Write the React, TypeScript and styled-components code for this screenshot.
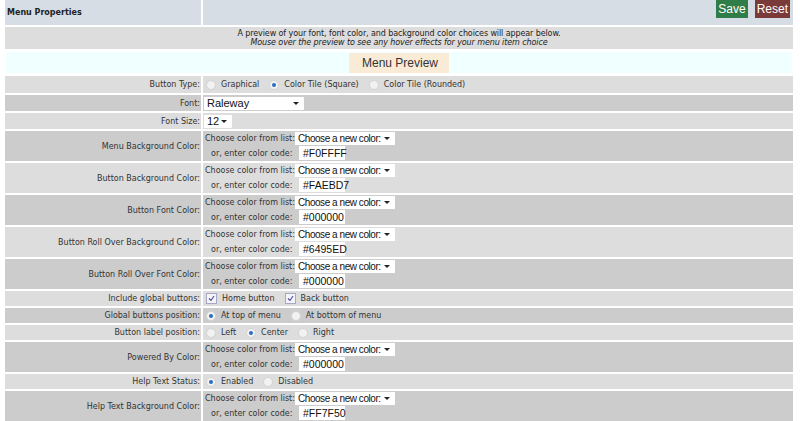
import React from 'react';
import styled, { createGlobalStyle } from 'styled-components';

const GlobalStyle = createGlobalStyle`
  html, body { margin: 0; padding: 0; background: #fff; }
  body { font-family: "DejaVu Sans", Verdana, sans-serif; font-size: 8px; color: #333; }
`;

type RowTone = 'light' | 'dark';

const Page = styled.div`
  padding: 0 5px 0 3px;
  margin-top: -2px;
`;

const Table = styled.table`
  width: 100%;
  border-collapse: separate;
  border-spacing: 2px;
`;

const Row = styled.tr<{ $tone: RowTone }>`
  background: ${(p) => (p.$tone === 'light' ? '#dddddd' : '#cccccc')};
`;

const HeaderRow = styled.tr`
  background: #d6dde4;
`;

const HeaderTitle = styled.td`
  width: 192px;
  height: 25px;
  padding: 0 2px;
  font-weight: bold;
  color: #222;
  vertical-align: middle;
`;

const HeaderActions = styled.td`
  text-align: right;
  vertical-align: top;
  padding: 0 3px 0 0;
`;

const ActionButton = styled.button<{ $kind: 'save' | 'reset' }>`
  font-family: "Liberation Sans", Arial, sans-serif;
  font-size: 12px;
  color: #fff;
  border: none;
  padding: 0 2px;
  height: 18px;
  margin-left: 7px;
  vertical-align: top;
  background: ${(p) => (p.$kind === 'save' ? '#2f7d48' : '#7a3a3a')};
`;

const InfoCell = styled.td`
  text-align: center;
  height: 22px;
  padding: 0;
  line-height: 9px;
  color: #222;
  letter-spacing: -0.1px;
`;

const PreviewCell = styled.td`
  background: #f0ffff;
  height: 21px;
  padding: 0;
  text-align: center;
  border: 1px solid #fff;
`;

const PreviewBox = styled.span`
  display: inline-block;
  background: #faebd7;
  font-family: "Liberation Sans", Arial, sans-serif;
  font-size: 12px;
  color: #333;
  padding: 3px 11px 3px 13px;
`;

const Label = styled.td`
  width: 192px;
  text-align: right;
  padding: 0 1px 0 2px;
  white-space: nowrap;
`;

const Value = styled.td<{ $h: number }>`
  padding: 0 1px;
  height: ${(p) => p.$h}px;
  vertical-align: middle;
`;

const Options = styled.div`
  display: flex;
  align-items: center;
  gap: 6px;
  padding-left: 2px;
`;

const Option = styled.label`
  display: flex;
  align-items: center;
  gap: 3px;
  margin-right: 4px;
`;

const Radio = styled.span<{ $on?: boolean }>`
  width: 8px;
  height: 8px;
  margin-right: 2px;
  border-radius: 50%;
  border: 1px solid #d4d4d4;
  background: #f2f2f2;
  position: relative;
  &::after {
    content: '';
    display: ${(p) => (p.$on ? 'block' : 'none')};
    position: absolute;
    left: 2px;
    top: 2px;
    width: 4px;
    height: 4px;
    border-radius: 50%;
    background: #2a6ebd;
  }
`;

const Check = styled.span`
  width: 9px;
  height: 9px;
  margin-right: 2px;
  border: 1px solid #a8a8c4;
  background: #f4f4fa;
  display: flex;
  align-items: center;
  justify-content: center;
`;

const SelectBox = styled.span<{ $w: number; $tight?: boolean }>`
  display: inline-flex;
  align-items: center;
  justify-content: space-between;
  width: ${(p) => p.$w}px;
  height: 13px;
  box-sizing: border-box;
  background: #fff;
  font-family: "Liberation Sans", Arial, sans-serif;
  font-size: ${(p) => (p.$tight ? '10px' : '11px')};
  letter-spacing: ${(p) => (p.$tight ? '-0.45px' : '0')};
  white-space: nowrap;
  overflow: hidden;
  color: #111;
  padding: 0 5px 0 3px;
`;

const Caret = styled.span`
  flex: none;
  width: 0;
  height: 0;
  border-left: 3px solid transparent;
  border-right: 3px solid transparent;
  border-top: 3px solid #222;
`;

const ColorGrid = styled.div`
  display: grid;
  grid-template-columns: 91px auto;
  row-gap: 1px;
  align-items: center;
  justify-content: start;
`;

const GridLabel = styled.span<{ $indent?: boolean }>`
  white-space: nowrap;
  padding-left: ${(p) => (p.$indent ? '7px' : '1px')};
`;

const CodeInput = styled.span`
  display: inline-block;
  width: 46px;
  height: 14px;
  margin-left: 4px;
  background: #fff;
  font-family: "Liberation Sans", Arial, sans-serif;
  font-size: 10.5px;
  line-height: 14px;
  color: #111;
  padding-left: 4px;
  box-sizing: border-box;
`;

function Select({ value, width, tight }: { value: string; width: number; tight?: boolean }) {
  return (
    <SelectBox $w={width} $tight={tight}>
      {value}
      <Caret />
    </SelectBox>
  );
}

function ColorPicker({ code }: { code: string }) {
  return (
    <ColorGrid>
      <GridLabel>Choose color from list:</GridLabel>
      <Select value="Choose a new color:" width={100} tight />
      <GridLabel $indent>or, enter color code:</GridLabel>
      <CodeInput>{code}</CodeInput>
    </ColorGrid>
  );
}

function RadioGroup({ items, selected }: { items: string[]; selected: number }) {
  return (
    <Options>
      {items.map((item, i) => (
        <Option key={item}>
          <Radio $on={i === selected} />
          {item}
        </Option>
      ))}
    </Options>
  );
}

const CheckMark = () => (
  <svg width="7" height="7" viewBox="0 0 7 7">
    <path d="M1 3.5 L3 5.5 L6 1" stroke="#4a4a9a" strokeWidth="1.1" fill="none" />
  </svg>
);

const colorRows: [string, string][] = [
  ['Menu Background Color:', '#F0FFFF'],
  ['Button Background Color:', '#FAEBD7'],
  ['Button Font Color:', '#000000'],
  ['Button Roll Over Background Color:', '#6495ED'],
  ['Button Roll Over Font Color:', '#000000'],
];

const TALL = 30;
const SHORT = 15;

export default function App() {
  return (
    <Page>
      <GlobalStyle />
      <Table>
        <tbody>
          <HeaderRow>
            <HeaderTitle>Menu Properties</HeaderTitle>
            <HeaderActions>
              <ActionButton $kind="save">Save</ActionButton>
              <ActionButton $kind="reset">Reset</ActionButton>
            </HeaderActions>
          </HeaderRow>
          <Row $tone="light">
            <InfoCell colSpan={2}>
              A preview of your font, font color, and background color choices will appear below.
              <br />
              <i>Mouse over the preview to see any hover effects for your menu item choice</i>
            </InfoCell>
          </Row>
          <tr>
            <PreviewCell colSpan={2}>
              <PreviewBox>Menu Preview</PreviewBox>
            </PreviewCell>
          </tr>
          <Row $tone="light">
            <Label>Button Type:</Label>
            <Value $h={17}>
              <RadioGroup items={['Graphical', 'Color Tile (Square)', 'Color Tile (Rounded)']} selected={1} />
            </Value>
          </Row>
          <Row $tone="dark">
            <Label>Font:</Label>
            <Value $h={16}>
              <Select value="Raleway" width={100} />
            </Value>
          </Row>
          <Row $tone="light">
            <Label>Font Size:</Label>
            <Value $h={16}>
              <Select value="12" width={28} />
            </Value>
          </Row>
          {colorRows.map(([label, code], i) => (
            <Row key={label} $tone={i % 2 === 0 ? 'dark' : 'light'}>
              <Label>{label}</Label>
              <Value $h={TALL}>
                <ColorPicker code={code} />
              </Value>
            </Row>
          ))}
          <Row $tone="light">
            <Label>Include global buttons:</Label>
            <Value $h={SHORT}>
              <Options>
                <Option>
                  <Check>
                    <CheckMark />
                  </Check>
                  Home button
                </Option>
                <Option>
                  <Check>
                    <CheckMark />
                  </Check>
                  Back button
                </Option>
              </Options>
            </Value>
          </Row>
          <Row $tone="dark">
            <Label>Global buttons position:</Label>
            <Value $h={SHORT}>
              <RadioGroup items={['At top of menu', 'At bottom of menu']} selected={0} />
            </Value>
          </Row>
          <Row $tone="light">
            <Label>Button label position:</Label>
            <Value $h={SHORT}>
              <RadioGroup items={['Left', 'Center', 'Right']} selected={1} />
            </Value>
          </Row>
          <Row $tone="dark">
            <Label>Powered By Color:</Label>
            <Value $h={TALL}>
              <ColorPicker code="#000000" />
            </Value>
          </Row>
          <Row $tone="light">
            <Label>Help Text Status:</Label>
            <Value $h={SHORT}>
              <RadioGroup items={['Enabled', 'Disabled']} selected={0} />
            </Value>
          </Row>
          <Row $tone="dark">
            <Label>Help Text Background Color:</Label>
            <Value $h={TALL}>
              <ColorPicker code="#FF7F50" />
            </Value>
          </Row>
        </tbody>
      </Table>
    </Page>
  );
}
